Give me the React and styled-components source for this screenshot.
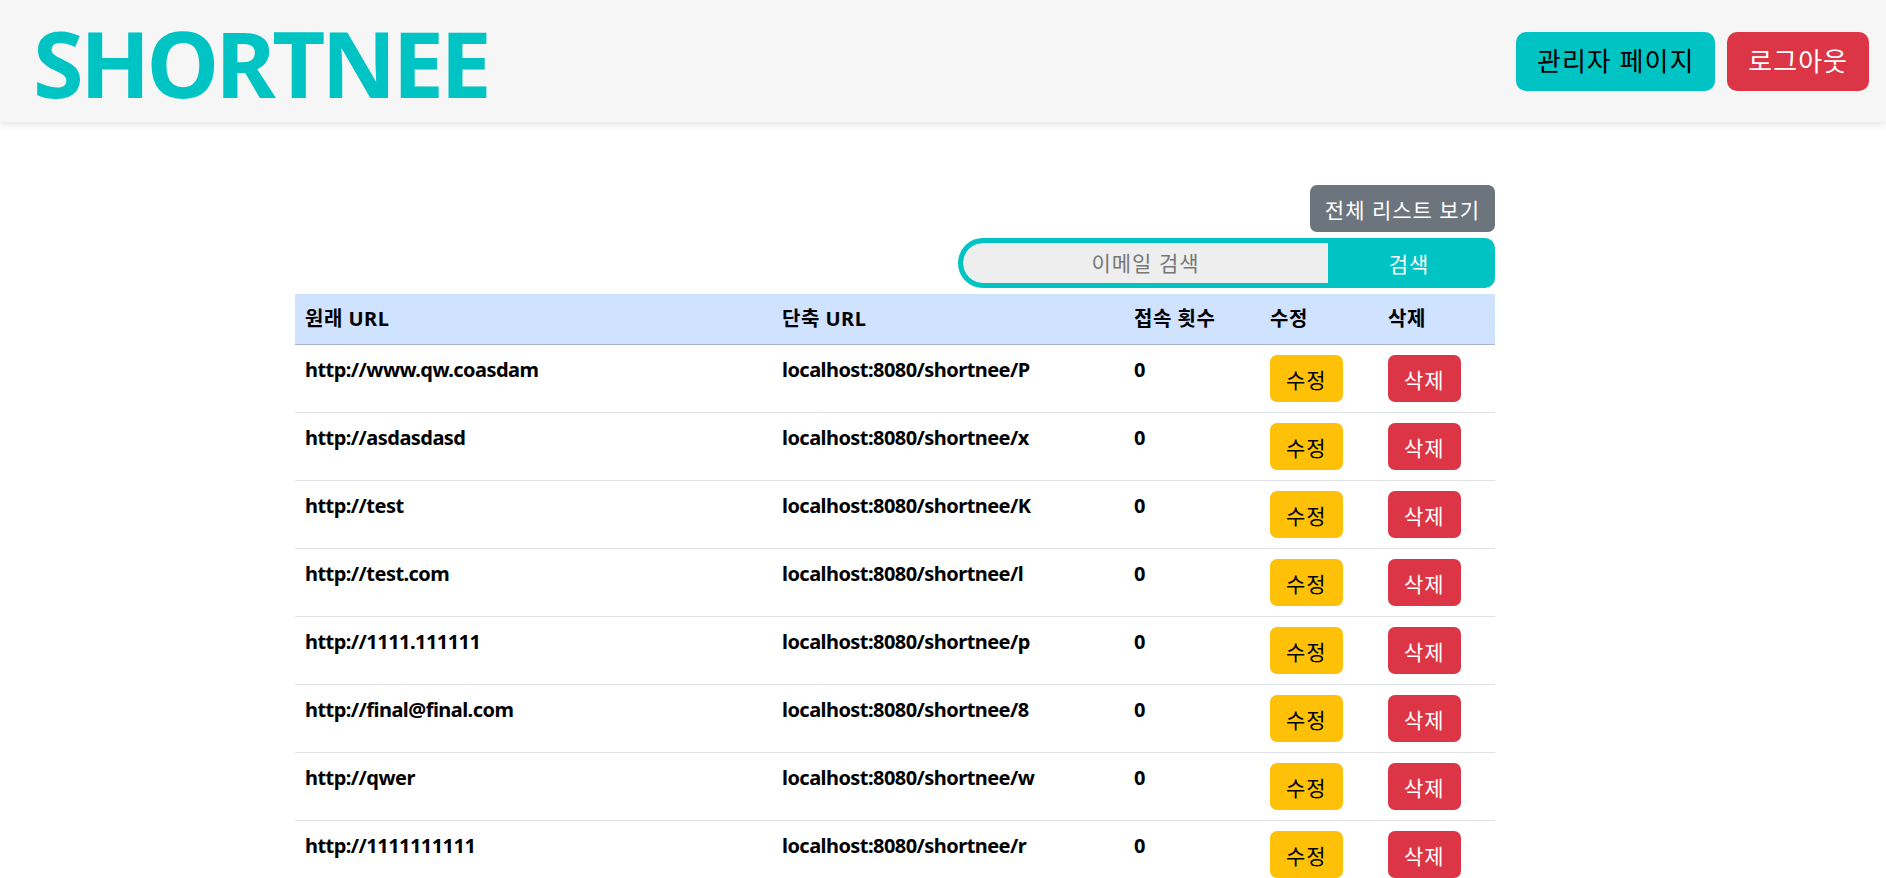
import React from "react";
import styled, { createGlobalStyle } from "styled-components";

const TEAL = "#00c4c4";

const GlobalStyle = createGlobalStyle`
  html, body {
    margin: 0;
    padding: 0;
    background: #fff;
    overflow: hidden;
  }
  body {
    font-family: "Noto Sans", "Noto Sans CJK KR", sans-serif;
    font-size: 20px;
    line-height: 1.5;
    color: #000;
  }
  * {
    box-sizing: border-box;
  }
`;

const rows = [
  { origin: "http://www.qw.coasdam", short: "localhost:8080/shortnee/P" },
  { origin: "http://asdasdasd", short: "localhost:8080/shortnee/x" },
  { origin: "http://test", short: "localhost:8080/shortnee/K" },
  { origin: "http://test.com", short: "localhost:8080/shortnee/l" },
  { origin: "http://1111.111111", short: "localhost:8080/shortnee/p" },
  { origin: "http://final@final.com", short: "localhost:8080/shortnee/8" },
  { origin: "http://qwer", short: "localhost:8080/shortnee/w" },
  { origin: "http://1111111111", short: "localhost:8080/shortnee/r" },
];

const App = () => {
  return (
    <>
      <GlobalStyle />
      <Header>
        <Logo>SHORTNEE</Logo>
        <NavButtons>
          <NavButton $variant="teal">관리자 페이지</NavButton>
          <NavButton $variant="red">로그아웃</NavButton>
        </NavButtons>
      </Header>
      <Main>
        <Toolbar>
          <ListAllButton>전체 리스트 보기</ListAllButton>
          <SearchForm onSubmit={(e) => e.preventDefault()}>
            <SearchInput placeholder="이메일 검색" />
            <SearchButton type="submit">검색</SearchButton>
          </SearchForm>
        </Toolbar>
        <UrlTable>
          <colgroup>
            <col style={{ width: 477 }} />
            <col style={{ width: 352 }} />
            <col style={{ width: 136 }} />
            <col style={{ width: 118 }} />
            <col style={{ width: 117 }} />
          </colgroup>
          <thead>
            <tr>
              <Th>원래 URL</Th>
              <Th>단축 URL</Th>
              <Th>접속 횟수</Th>
              <Th>수정</Th>
              <Th>삭제</Th>
            </tr>
          </thead>
          <tbody>
            {rows.map((row) => (
              <tr key={row.short}>
                <Td>{row.origin}</Td>
                <Td>{row.short}</Td>
                <Td>0</Td>
                <Td>
                  <RowButton $variant="edit">수정</RowButton>
                </Td>
                <Td>
                  <RowButton $variant="delete">삭제</RowButton>
                </Td>
              </tr>
            ))}
          </tbody>
        </UrlTable>
      </Main>
    </>
  );
};

export default App;

const Header = styled.header`
  height: 122px;
  display: flex;
  align-items: center;
  justify-content: space-between;
  padding: 0 17px 0 33px;
  background: #f6f6f6;
  box-shadow: 0 2px 8px rgba(0, 0, 0, 0.12);
  position: relative;
`;

const Logo = styled.h1`
  margin: 4px 0 0;
  font-family: "Noto Sans", sans-serif;
  font-size: 92px;
  font-weight: 700;
  line-height: 1;
  letter-spacing: -3.75px;
  color: ${TEAL};
`;

const NavButtons = styled.div`
  display: flex;
  gap: 12px;
`;

const NavButton = styled.button`
  height: 59px;
  padding: 0 21px;
  border: none;
  border-radius: 10px;
  font-family: inherit;
  font-size: 26px;
  letter-spacing: 1px;
  line-height: 1.5;
  cursor: pointer;
  background: ${({ $variant }) => ($variant === "red" ? "#dc3545" : TEAL)};
  color: ${({ $variant }) => ($variant === "red" ? "#fff" : "#000")};
`;

const Main = styled.main`
  width: 1200px;
  margin: 63px 0 0 295px;
`;

const Toolbar = styled.div`
  display: flex;
  flex-direction: column;
  align-items: flex-end;
  gap: 6px;
  margin-bottom: 6px;
`;

const ListAllButton = styled.button`
  height: 47px;
  padding: 0 15px;
  border: none;
  border-radius: 7px;
  background: #6c757d;
  color: #fff;
  font-family: inherit;
  font-size: 21px;
  letter-spacing: 1px;
  cursor: pointer;
`;

const SearchForm = styled.form`
  width: 537px;
  height: 50px;
  display: flex;
  border: 5px solid ${TEAL};
  border-radius: 25px 10px 10px 25px;
  background: ${TEAL};
  overflow: hidden;
`;

const SearchInput = styled.input`
  flex: 1;
  border: none;
  outline: none;
  border-radius: 20px 0 0 20px;
  background: #eeeeee;
  text-align: center;
  font-family: inherit;
  font-size: 21px;
  letter-spacing: 1px;
  color: #333;

  &::placeholder {
    color: #777;
  }
`;

const SearchButton = styled.button`
  width: 162px;
  border: none;
  background: ${TEAL};
  color: #fff;
  font-family: inherit;
  font-size: 21px;
  letter-spacing: 1px;
  cursor: pointer;
`;

const UrlTable = styled.table`
  width: 1200px;
  table-layout: fixed;
  border-collapse: collapse;
`;

const Th = styled.th`
  padding: 10px;
  text-align: left;
  font-weight: 700;
  letter-spacing: 0.5px;
  background: #cfe2ff;
  border-bottom: 1px solid #a6b5cc;
`;

const Td = styled.td`
  padding: 10px;
  vertical-align: top;
  font-weight: 700;
  letter-spacing: -0.55px;
  border-bottom: 1px solid #dee2e6;
  white-space: nowrap;
`;

const RowButton = styled.button`
  height: 47px;
  padding: 0 16px;
  border: none;
  border-radius: 7px;
  font-family: inherit;
  font-size: 21px;
  letter-spacing: 1px;
  cursor: pointer;
  background: ${({ $variant }) => ($variant === "delete" ? "#dc3545" : "#ffc107")};
  color: ${({ $variant }) => ($variant === "delete" ? "#fff" : "#000")};
`;
